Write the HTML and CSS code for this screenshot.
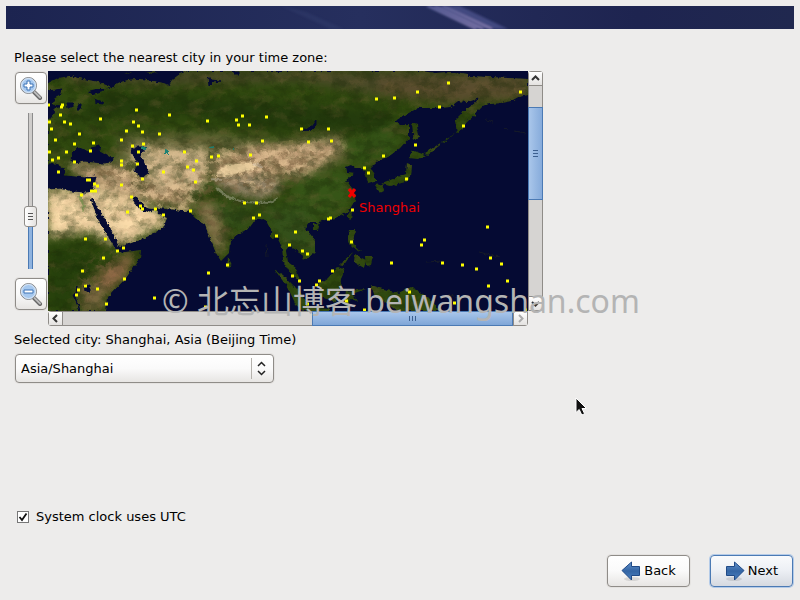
FILE: index.html
```html
<!DOCTYPE html>
<html lang="en">
<head>
<meta charset="utf-8">
<title>Time zone</title>
<link rel="stylesheet" href="styles.css">
</head>
<body>
<header class="banner">
  <svg viewBox="0 0 788 23" preserveAspectRatio="none" aria-hidden="true">
    <defs>
      <linearGradient id="navy"><stop offset="0" stop-color="#1c2450"/><stop offset=".45" stop-color="#262f5e"/><stop offset=".8" stop-color="#1e2450"/><stop offset="1" stop-color="#20284f"/></linearGradient>
      <linearGradient id="ray" x1="0" y1="0" x2="1" y2="1"><stop offset="0" stop-color="#5c6299"/><stop offset="1" stop-color="#857bad"/></linearGradient>
      <filter id="soft"><feGaussianBlur stdDeviation=".8"/></filter>
    </defs>
    <path fill="url(#navy)" d="M0 0H788V23H0z"/>
    <path fill="#34406f" opacity=".4" filter="url(#soft)" d="M275 0L325 23H338L300 6z"/>
    <g filter="url(#soft)">
      <path fill="#434880" d="M419 0H454L502 23H468z"/>
      <path stroke="url(#ray)" stroke-width="2" d="M422 0L470 23M429 0L477 23M437 0L486 23"/>
    </g>
  </svg>
</header>

<main class="content">
  <p class="prompt" id="prompt">Please select the nearest city in your time zone:</p>

  <div class="picker">
    <div class="zoom">
      <button class="btn zoom-btn" type="button" aria-label="Zoom in">
        <svg width="24" height="24" viewBox="0 0 24 24"><path d="M15 16l6 6" stroke="#666" stroke-width="4" stroke-linecap="round"/><path d="M15.500 16l5.500 5.500" stroke="#bbb" stroke-width="2" stroke-linecap="round"/><circle cx="9.500" cy="9.500" r="8" fill="#a6c8ee" stroke="#8a8a8a"/><circle cx="9.500" cy="9.500" r="7" fill="none" stroke="#dfeaf7"/><path d="M8 5h3v3h3v3h-3v3H8v-3H5V8h3z" fill="#fff" stroke="#3d73b5"/></svg>
      </button>
      <input class="zoom-range" type="range" min="0" max="100" value="31" aria-label="Zoom level">
      <button class="btn zoom-btn" type="button" aria-label="Zoom out">
        <svg width="24" height="24" viewBox="0 0 24 24"><path d="M15 16l6 6" stroke="#666" stroke-width="4" stroke-linecap="round"/><path d="M15.500 16l5.500 5.500" stroke="#bbb" stroke-width="2" stroke-linecap="round"/><circle cx="9.500" cy="9.500" r="8" fill="#a6c8ee" stroke="#8a8a8a"/><circle cx="9.500" cy="9.500" r="7" fill="none" stroke="#dfeaf7"/><path d="M5 8h9v3H5z" fill="#fff" stroke="#3d73b5"/></svg>
      </button>
    </div>

    <div class="map-view">
      <svg class="map" viewBox="0 0 480 240" role="img" aria-labelledby="prompt">
        <defs>
          <clipPath id="land">
            <path d="M0 12L10 7 22 5 35 8 50 11 62 15 58 18 48 18 40 20 45 24 52 22 60 17 66 16 70 12 80 9 92 8 104 10 115 12 121 14 124 9 132 3 140 0 373 0 387 2 405 1 420 3 420 5 440 6 480 8V24L470 26 463 30 453 32 443 33 434 35 430 39 427 44 420 50 415 57 409 62 407 49 415 41 427 32 431 27 420 31 410 30 402 36 393 37 370 37 357 44 347 50 352 54 361 54 361 67 352 77 340 86 330 89 323 96 327 104 327 110 320 112 318 104 315 99 317 97 307 97 303 94 298 96 299 101 307 102 298 109 303 116 306 120 308 125 306 131 300 141 291 146 282 148 270 151 262 151 257 157 267 169 267 181 260 187 255 189 253 182 245 177 242 174 238 179 240 191 248 197 251 206 252 211 242 202 235 189 234 176 229 166 223 167 223 159 217 148 207 149 202 156 182 169 181 182 173 190 168 182 160 162 157 154 147 147 142 141 128 139 110 137 107 138 98 137 93 131 87 125 84 128 92 139 100 142 107 138 112 144 119 147 115 157 97 167 72 176 70 174 63 159 50 139 43 127 42 127 51 151 60 166 70 182 93 179 92 187 78 207 60 226 58 240H0z"/>
            <path d="M364 52l5 2 2 12-5 4-1-8zM364 79l13 5-7 4-9-1zM359 92l5 2-1 12-6 5-14 4-10-2 14-6 11-4zM327 114l7-1 2 7-4 2zM304 138l-1 11-4-4zM265 153l7-1-2 7h-5zM302 159h5l-2 13 8 9-8-4-5-5zM307 183l5 3 6 3-2 8-10-6zM270 214l10-7 10-11 7 3-4 9-1 11-4 12-15-5zM226 198l9 6 18 18 7 14-5 4-7-6-8-17zM180 186l4 8-5 2zM298 220l20-2-14 5 5 7-6-2-3 9-4-4zM323 214l9 3 18 5 13-6 17 10 13 14h-44l-12-9-10-5zM256 236l26 2v2h-26zM377 82l31-20-29 22zM291 194l14-13-10 14zM317 185l8 0-2 9-5 1z"/>
          </clipPath>
          <filter id="blur" x="-20%" y="-20%" width="140%" height="140%" color-interpolation-filters="sRGB"><feGaussianBlur stdDeviation="5"/></filter>
          <filter id="edges" x="0" y="0" width="100%" height="100%" color-interpolation-filters="sRGB"><feTurbulence result="n" type="fractalNoise" baseFrequency=".25" numOctaves="3" seed="9"/><feDisplacementMap in="SourceGraphic" in2="n" scale="4" xChannelSelector="R" yChannelSelector="G"/></filter>
          <filter id="dark" x="0" y="0" width="100%" height="100%" color-interpolation-filters="sRGB"><feTurbulence type="fractalNoise" baseFrequency=".07 .1" numOctaves="6" seed="12"/><feColorMatrix values="0 0 0 0 .1  0 0 0 0 .16  0 0 0 0 .03  3 0 0 0 -1.200"/></filter>
          <filter id="brown" x="0" y="0" width="100%" height="100%" color-interpolation-filters="sRGB"><feTurbulence type="fractalNoise" baseFrequency=".05 .09" numOctaves="6" seed="22"/><feColorMatrix values="0 0 0 0 .42  0 0 0 0 .36  0 0 0 0 .2  0 3 0 0 -1.500"/></filter>
          <filter id="arid" x="0" y="0" width="100%" height="100%" color-interpolation-filters="sRGB"><feGaussianBlur in="SourceAlpha" stdDeviation="5" result="area"/><feTurbulence type="fractalNoise" baseFrequency=".1 .14" numOctaves="6" seed="31"/><feColorMatrix values="0 0 0 0 .91  0 0 0 0 .78  0 0 0 0 .6  0 3.500 0 0 -1.500"/><feComposite in2="area" operator="in"/></filter>
          <filter id="ridge" x="0" y="0" width="100%" height="100%" color-interpolation-filters="sRGB"><feGaussianBlur in="SourceAlpha" stdDeviation="4" result="area"/><feTurbulence type="fractalNoise" baseFrequency=".12 .16" numOctaves="6" seed="47"/><feColorMatrix values="0 0 0 0 .45  0 0 0 0 .36  0 0 0 0 .23  4 0 0 0 -1.900"/><feComposite in2="area" operator="in"/></filter>
        </defs>
        <path fill="#050a33" d="M0 0H480V240H0z"/>
        <g filter="url(#edges)">
          <g clip-path="url(#land)">
            <path fill="#30490f" d="M0 0H480V240H0z"/>
            <g filter="url(#blur)">
              <path fill="#4b4a28" d="M0 0H480V12L330 24 250 10 110 14 30 12z"/>
              <path fill="#5a4d2e" d="M330 6L480 8V28L400 32 330 24z"/>
              <path fill="#243b0d" d="M60 22L200 28 340 40 350 62 250 60 120 42 20 50z"/>
              <path fill="#66683a" d="M70 64L170 62 210 70 250 70 290 62 310 84 250 110 70 90z"/>
              <path fill="#365517" d="M255 105L300 98 306 130 270 150 230 140zM290 74L350 52 350 80 310 94z"/>
              <path fill="#cbb288" d="M80 78L112 76 160 80 158 106 110 106 95 98zM104 94L160 96 155 118 125 125 95 115z"/>
              <path fill="#c4a27b" d="M160 94L200 76 285 70 298 74 260 102 215 104 170 108z"/>
              <path fill="#8f8066" d="M165 110L180 103 230 106 233 120 212 128 180 122z"/>
              <path fill="#ecd0a0" d="M0 119H60L110 140 118 152 72 176 40 160 0 166z"/>
              <path fill="#bfa079" d="M18 92L72 92 110 118 142 118 142 138 90 128 40 114z"/>
              <path fill="#fbdcaa" d="M0 122H32L44 152 0 164zM55 120L80 126 112 148 80 167 64 142z"/>
              <path fill="#86774d" d="M148 134L168 130 178 168 172 186 152 150z"/>
              <path fill="#9b6e4e" d="M60 196L88 181 76 206 58 222 44 214z"/>
              <path fill="#26400c" d="M0 174L44 178 55 196 30 210 20 240H0z"/>
              <path fill="#34501a" d="M212 134L262 140 270 190 230 170zM165 132L205 138 200 156 182 160z"/>
              <path fill="#7c6a42" d="M31 212L58 213 54 240H34z"/>
            </g>
            <path fill="#e9cda0" d="M170 100L178 93 202 90 211 96 195 103 178 106 169 106z"/>
            <path class="texture" filter="url(#brown)" opacity=".4" d="M0 0H480V240H0z"/>
            <path class="texture" filter="url(#dark)" opacity=".4" d="M0 0H480V240H0z"/>
            <path class="texture" filter="url(#arid)" opacity=".65" d="M0 119H40L58 112 74 94 90 78 155 80 205 76 285 70 300 72 262 102 222 106 230 118 212 124 178 110 156 112 144 138 120 152 72 176 40 160 0 164z"/>
            <path class="texture" filter="url(#ridge)" opacity=".55" d="M18 92L70 92 110 112 160 100 165 84 210 76 285 72 262 104 230 122 180 120 145 138 90 128zM145 134L180 130 180 184 160 160zM50 180L92 178 60 220 50 240H30V205z"/>
            <path fill="#f0d3a2" opacity=".7" d="M172 99L180 94 200 92 208 95 192 102 178 104z"/>
            <path fill="none" stroke="#d9d4c8" stroke-width="2" opacity=".35" d="M163 108L173 109M168 117L180 126 195 131 222 132 230 127M205 92L215 97"/>
            <path fill="none" stroke="#6d8a46" stroke-width="2" opacity=".7" d="M31 125L36 135 34 142"/>
          </g>
          <path fill="#050a33" stroke="#050a33" d="M0 105L8 103 17 105 37 107 48 105 46 114 44 120 38 121 25 120 12 117 0 118zM0 93L8 93 17 99 15 105H0zM23 87L25 82 30 77 35 78 40 81 50 79 57 83 65 87 63 91 55 92 37 90 27 92zM43 77L52 75 53 78 45 79zM83 79L90 76 99 76 92 84 97 92 100 102 94 106 87 101 89 91zM0 20L14 18 12 24 6 27 4 34 14 35 6 38 4 45 0 50zM19 32h6v5h-5zM29 34h4v4h-4zM46 28l10 4-9-1zM0 9L0 0 10 5zM253 60L263 56 268 49 268 54 263 59zM36 215l6-1 0 6-5 1zM160 6l4 3 9 1-8 1-4 4zM187 1h4v2h-4zM30 215l-2 10 4 15-6-14zM44 127L63 159 70 174 60 160 50 141z"/>
          <path fill="#2b3716" d="M76 2l8-1-4 2zM98 1h12l-5 2z"/>
          <path fill="#1c8174" d="M94 76l5-1-1 4-4-1zM160 77l5-2v2zM184 77h2v1zM117 78l3 1 0 4h-3z"/>
          <path fill="none" stroke="#303519" stroke-width="1" opacity=".4" d="M438 49l7 2M456 57l4 1M466 60l12 2M218 174l1 12M378 191l18-1M398 222l15 6M430 181l22 5"/>
        </g>
        <path class="cities" d="M-1 34h3M13 34h3M12 36h3M11 44h3M0 51h3M15 51h3M21 53h3M51 48h3M2 58h3M30 63h3M6 69h3M25 73h3M44 72h3M41 80h3M0 81h3M17 81h3M9 87h3M3 89h3M25 91h3M9 101h3M38 109h5M45 113h3M48 115h3M42 120h7M87 39h3M84 51h3M89 55h3M77 60h3M93 61h3M110 63h3M120 44h3M158 50h3M72 69h3M83 75h3M94 73h3M89 81h3M72 90h3M72 94h3M88 93h3M93 108h3M114 101h3M72 114h3M135 81h3M147 90h3M138 96h3M144 99h3M146 111h3M32 124h3M82 126h3M78 141h3M91 135h3M93 138h3M106 138h3M114 144h3M141 140h3M36 168h3M56 168h3M68 180h3M74 177h3M54 187h3M33 200h3M75 208h3M36 215h3M29 219h3M27 224h3M48 218h3M57 233h3M105 227h3M156 236h3M187 49h3M193 45h3M217 46h3M189 54h3M200 54h3M213 70h3M252 58h3M279 58h3M259 71h3M282 70h3M162 86h3M169 85h3M201 84h3M315 97h3M319 102h3M195 132h3M207 132h3M210 144h3M204 147h3M178 194h3M159 202h3M227 165h3M246 161h3M240 174h3M253 180h3M258 183h3M279 148h3M281 147h3M303 139h3M302 171h3M283 200h3M270 210h3M267 214h3M243 205h3M250 210h3M258 233h3M297 230h3M315 239h3M327 28h3M345 27h3M368 21h3M399 12h3M471 21h3M390 36h3M414 55h3M366 74h3M334 85h3M357 108h3M438 156h3M375 169h3M372 174h3M342 192h3M393 192h3M413 194h3M427 198h3M441 187h3M452 193h3M458 210h3M439 215h3M360 221h3M405 232h3M476 239h3"/>
        <path stroke="#f00000" stroke-width="3" d="M301 118l6 8M307 118l-6 8"/>
        <text class="city-name" x="311" y="141">Shanghai</text>
      </svg>

      <div class="bar bar-v">
        <button class="arrow arrow-up" type="button" aria-label="Scroll up"><svg width="9" height="9" viewBox="0 0 9 9"><path d="M1 6l3.500-3.500L8 6"/></svg></button>
        <div class="thumb thumb-v"><svg width="7" height="9" viewBox="0 0 7 9"><path d="M1 1.500h5M1 4.500h5M1 7.500h5"/></svg></div>
        <button class="arrow arrow-down" type="button" aria-label="Scroll down"><svg width="9" height="9" viewBox="0 0 9 9"><path d="M1 3l3.500 3.500L8 3"/></svg></button>
      </div>
      <div class="bar bar-h">
        <button class="arrow arrow-left" type="button" aria-label="Scroll left"><svg width="9" height="9" viewBox="0 0 9 9"><path d="M6 1L2.500 4.500 6 8"/></svg></button>
        <div class="thumb thumb-h"><svg width="9" height="7" viewBox="0 0 9 7"><path d="M1.500 1v5M4.500 1v5M7.500 1v5"/></svg></div>
        <button class="arrow arrow-right" type="button" aria-label="Scroll right" disabled><svg width="9" height="9" viewBox="0 0 9 9"><path d="M3 1l3.500 3.500L3 8"/></svg></button>
      </div>
    </div>
  </div>

  <label class="selected" for="zone">Selected city: Shanghai, Asia (Beijing Time)</label>
  <div class="combo">
    <select class="btn zone" id="zone"><option>Asia/Shanghai</option></select>
    <svg class="combo-arrows" width="23" height="23" viewBox="0 0 23 23" aria-hidden="true"><path d="M.5 1v21" stroke="#b5b2ad"/><path d="M7 9l3.500-3.500L14 9M7 14l3.500 3.500L14 14" fill="none" stroke="#222" stroke-width="1.500"/></svg>
  </div>

  <label class="utc"><input type="checkbox" checked>System clock uses UTC</label>
</main>

<footer class="actions">
  <button class="btn action" type="button">
    <svg width="20" height="20" viewBox="0 0 20 20"><defs><linearGradient id="blue" x2="0" y2="1"><stop offset="0" stop-color="#6292cc"/><stop offset=".5" stop-color="#3465a4"/><stop offset="1" stop-color="#4a80c0"/></linearGradient></defs><ellipse cx="11" cy="18" rx="8" ry="2" fill="#000" opacity=".1"/><path d="M1 9.500L10.500 1v4.500h8v9h-8V19z" fill="url(#blue)" stroke="#204a87"/></svg>Back
  </button>
  <button class="btn action action-default" type="button">
    <svg width="20" height="20" viewBox="0 0 20 20"><ellipse cx="9" cy="18" rx="8" ry="2" fill="#000" opacity=".1"/><path d="M19 9.500L9.500 1v4.500h-8v9h8V19z" fill="url(#blue)" stroke="#204a87"/></svg>Next
  </button>
</footer>

<div class="watermark">© 北忘山博客 beiwangshan.com</div>
<svg class="pointer" width="14" height="21" viewBox="0 0 14 21" aria-hidden="true"><path d="M1 1v14.500l3.200-3 2.600 5.500 2.800-1.300L7 11.500h4.500z" fill="#111" stroke="#fff" stroke-width="1"/></svg>
</body>
</html>
```
FILE: styles.css
```css
* {
  box-sizing: border-box;
}

body {
  position: relative;
  display: flex;
  flex-direction: column;
  min-height: 100vh;
  margin: 0;
  padding: 6px;
  background: #edeceb;
  color: #000;
  font: 13px/16px "DejaVu Sans", sans-serif;
}

button,
select {
  font: inherit;
  color: inherit;
}

.banner {
  height: 23px;
}

.banner svg {
  display: block;
  width: 100%;
  height: 100%;
}

.content {
  flex: 1;
  display: flex;
  flex-direction: column;
  align-items: flex-start;
  padding: 21px 8px 0;
}

.prompt {
  margin: 0 0 5px;
}

.btn {
  border: 1px solid #8f8c88;
  border-radius: 4px;
  background: linear-gradient(#fff, #fafafa 50%, #e7e5e3);
  box-shadow: 0 0 0 1px #e4e2e0;
}

.picker {
  display: flex;
  align-items: flex-start;
}

.zoom {
  display: flex;
  flex-direction: column;
  align-items: center;
  width: 34px;
  padding: 1px 1px 0;
}

.zoom-btn {
  display: grid;
  place-items: center;
  width: 32px;
  height: 32px;
  padding: 0;
}

.zoom-range {
  appearance: none;
  writing-mode: vertical-lr;
  direction: rtl;
  align-self: flex-start;
  width: 13px;
  height: 156px;
  margin: 9px;
  background: linear-gradient(90deg, #8c8c8c 1px, #cfcdcb 1px 4px, #8c8c8c 4px) 4px 0 / 5px 64% no-repeat,
    linear-gradient(90deg, #4b7ab4 1px, #8fb3df 1px 4px, #4b7ab4 4px) 4px 100% / 5px 50% no-repeat;
}

.zoom-range::-webkit-slider-thumb {
  appearance: none;
  width: 13px;
  height: 21px;
  border: 1px solid #8f8c88;
  border-radius: 3px;
  background: linear-gradient(#555, #555) 3px 6px / 5px 1px no-repeat,
    linear-gradient(#555, #555) 3px 9px / 5px 1px no-repeat,
    linear-gradient(#555, #555) 3px 12px / 5px 1px no-repeat,
    linear-gradient(90deg, #fff, #e4e2e0);
}

.map-view {
  display: grid;
  grid-template-columns: 480px 15px;
  grid-template-rows: auto 15px;
}

.map {
  display: block;
  width: 100%;
}

.texture {
  fill: #fff;
}

.cities {
  fill: none;
  stroke: #ff0;
  stroke-width: 3px;
}

.city-name {
  fill: #f00000;
  font-size: 13px;
}

.bar {
  display: flex;
  background: #d6d4d2;
  border: 1px solid #8f8c88;
}

.bar-v {
  flex-direction: column;
  border-radius: 3px 3px 3px 0;
}

.bar-h {
  border-radius: 3px 0 3px 3px;
}

.bar svg {
  display: block;
  fill: none;
  stroke: #333;
  stroke-width: 2px;
}

.arrow {
  display: grid;
  place-items: center;
  flex: none;
  width: 14px;
  height: 14px;
  padding: 0;
  border: 0 solid #8f8c88;
  background: linear-gradient(#fff, #e4e2e0);
}

.bar-v .arrow {
  width: 13px;
}

.bar-h .arrow {
  height: 13px;
}

.arrow-up {
  border-bottom-width: 1px;
}

.arrow-down {
  margin-top: auto;
  border-top-width: 1px;
}

.arrow-left {
  border-right-width: 1px;
}

.arrow-right {
  border-left-width: 1px;
}

.bar .arrow:disabled svg {
  stroke: #aaa;
}

.thumb {
  display: grid;
  place-items: center;
  border: 1px solid #4b7ab4;
}

.bar .thumb svg {
  stroke: #3c5f8f;
  stroke-width: 1px;
}

.thumb-v {
  height: 39%;
  margin: 21px -1px 0;
  background: linear-gradient(90deg, #a9c6ea, #86abdb);
}

.thumb-h {
  width: 42%;
  margin: -1px 0 -1px auto;
  background: linear-gradient(#a9c6ea, #7fa6d8);
}

.selected {
  margin: 6px 0;
}

.combo {
  display: grid;
  align-items: center;
  width: 259px;
  margin-left: 1px;
}

.combo > * {
  grid-area: 1 / 1;
}

.zone {
  appearance: none;
  height: 29px;
  padding: 0 28px 0 5px;
}

.combo-arrows {
  justify-self: end;
  pointer-events: none;
}

.utc {
  display: flex;
  align-items: center;
  gap: 7px;
  margin-top: 126px;
  padding-left: 3px;
}

.utc input {
  appearance: none;
  width: 12px;
  height: 12px;
  margin: 0;
  border: 1px solid #777;
  background: #fff url("data:image/svg+xml,%3Csvg xmlns='http://www.w3.org/2000/svg' viewBox='0 0 10 10'%3E%3Cpath d='M1.500 5l2.500 3L8.500 1.500' fill='none' stroke='%23111' stroke-width='1.800'/%3E%3C/svg%3E");
}

.actions {
  display: flex;
  justify-content: flex-end;
  gap: 20px;
  padding: 0 1px 7px;
}

.action {
  display: flex;
  align-items: center;
  justify-content: center;
  gap: 3px;
  width: 83px;
  height: 32px;
  padding: 0;
}

.action-default {
  border-color: #4b7ab4;
  background: linear-gradient(#f9fafc, #eceff4 50%, #d5d9e0);
  box-shadow: 0 0 0 1px #b4cbe8;
}

.watermark {
  position: absolute;
  left: 162px;
  top: 280px;
  color: #b4b4b4;
  font: 32px/42px "Noto Sans", "Noto Sans CJK SC", sans-serif;
  white-space: nowrap;
  pointer-events: none;
}

.pointer {
  position: absolute;
  left: 575px;
  top: 397px;
}
```
